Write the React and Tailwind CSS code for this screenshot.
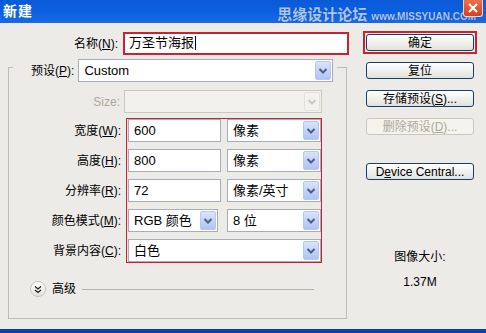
import React from "react";

const font = "font-['Liberation_Sans','Noto_Sans_CJK_SC',sans-serif]";

const Chevron = ({ color = "#4c5f87" }) => (
  <svg width="10" height="8" viewBox="0 0 10 8">
    <path d="M1.5 2 L5 5.5 L8.5 2" fill="none" stroke={color} strokeWidth="2" />
  </svg>
);

const Select = ({ value, width, disabled }) => (
  <div
    className={`flex h-[23px] border ${
      disabled ? "border-[#cac8bb] bg-[#f2f1ee]" : "border-[#a7aeb8] bg-white"
    } ${width}`}
  >
    <span className="flex-1 pl-[5px] text-[13px] leading-[21px] text-black whitespace-nowrap">
      {value}
    </span>
    <div
      className={`m-[1px] flex w-[16px] items-center justify-center rounded-[2px] border ${
        disabled
          ? "border-[#e4e2da] bg-[#f3f2ee]"
          : "border-[#b6c8f2] bg-gradient-to-b from-[#d8e3fd] to-[#afc4f4]"
      }`}
    >
      <Chevron color={disabled ? "#c9c7bf" : "#4c5f87"} />
    </div>
  </div>
);

const Input = ({ value, width }) => (
  <div className={`h-[23px] border border-[#a7aeb8] bg-white pl-[5px] text-[13px] leading-[21px] ${width}`}>
    {value}
  </div>
);

const Label = ({ text, k, tail = "):" }) => (
  <span className="text-[12px] text-black whitespace-nowrap">
    {text}(<span className="underline">{k}</span>
    {tail}
  </span>
);

const Button = ({ children, disabled }) => (
  <div
    className={`flex h-[17px] w-[108px] items-center justify-center rounded-[3px] border text-[12px] ${
      disabled
        ? "border-[#cbc8ba] bg-[#f4f3ee] text-[#aca899]"
        : "border-[#1c3c6e] bg-gradient-to-b from-white to-[#e2e2dc] text-black"
    }`}
  >
    {children}
  </div>
);

export default function App() {
  return (
    <div className={`flex h-[333px] w-[486px] flex-col overflow-hidden bg-[#ecebe8] ${font}`}>
      <div className="relative flex h-[23px] items-center bg-gradient-to-b from-[#0a5ad8] via-[#0b60e0] to-[#1a6ae4] pl-[3px]">
        <span className="text-[14px] font-bold tracking-[1px] text-white">新建</span>
        <div className="absolute right-[10px] top-[7px] flex items-end gap-[4px]">
          <span className="text-[15px] font-bold leading-[16px] text-[#a9c6f6] [text-shadow:0_0_1px_#123c92]">
            思缘设计论坛
          </span>
          <span className="text-[10px] font-bold leading-[12px] text-[#a9c6f6] [text-shadow:0_0_1px_#123c92]">
            www.MISSYUAN.COM
          </span>
        </div>
        <div className="absolute right-[3px] top-0 flex h-[17px] w-[20px] items-center justify-center rounded-b-[3px] border border-t-0 border-[#f3d2c6] bg-gradient-to-b from-[#e8704e] to-[#d4401b]">
          <svg width="12" height="12" viewBox="0 0 12 12">
            <path d="M2 2 L10 10 M10 2 L2 10" stroke="white" strokeWidth="2.2" />
          </svg>
        </div>
      </div>

      <div className="flex flex-1">
        <div className="w-[349px] pl-[8px]">
          <div className="mt-[8px] flex items-center">
            <div className="w-[112px] pr-[2px] text-right">
              <Label text="名称" k="N" />
            </div>
            <div className="ml-[3px] h-[23px] w-[226px] border-2 border-[#d0202e] bg-white">
              <div className="flex h-full items-center pl-[4px] text-[13px]">
                万圣节海报<span className="ml-[1px] h-[14px] w-[1px] bg-black" />
              </div>
            </div>
          </div>

          <div className="mt-[12px] h-[252px] w-[339px] border border-[#bdbcb5]">
            <div className="-mt-[9px] ml-[4px] flex w-[324px] items-center bg-[#ecebe8] pl-[18px]">
              <Label text="预设" k="P" />
              <div className="ml-[4px]">
                <Select value="Custom" width="w-[255px]" />
              </div>
            </div>

            <div className="mt-[8px] flex items-center">
              <div className="w-[111px] text-right text-[12px] text-[#aca899]">Size:</div>
              <div className="ml-[4px]">
                <Select value="" width="w-[198px]" disabled />
              </div>
            </div>

            <div className="mt-[5px] flex">
              <div className="flex w-[112px] flex-col gap-[7px] pt-[1px]">
                <div className="flex h-[23px] items-center justify-end"><Label text="宽度" k="W" /></div>
                <div className="flex h-[23px] items-center justify-end"><Label text="高度" k="H" /></div>
                <div className="flex h-[23px] items-center justify-end"><Label text="分辨率" k="R" /></div>
                <div className="flex h-[23px] items-center justify-end"><Label text="颜色模式" k="M" /></div>
                <div className="flex h-[23px] items-center justify-end"><Label text="背景内容" k="C" /></div>
              </div>
              <div className="ml-[5px] flex w-[196px] flex-col gap-[7px] border border-[#d0202e] pl-[1px]">
                <div className="flex gap-[6px]">
                  <Input value="600" width="w-[93px]" />
                  <Select value="像素" width="w-[94px]" />
                </div>
                <div className="flex gap-[6px]">
                  <Input value="800" width="w-[93px]" />
                  <Select value="像素" width="w-[94px]" />
                </div>
                <div className="flex gap-[6px]">
                  <Input value="72" width="w-[93px]" />
                  <Select value="像素/英寸" width="w-[94px]" />
                </div>
                <div className="flex gap-[9px]">
                  <Select value="RGB 颜色" width="w-[90px]" />
                  <Select value="8 位" width="w-[94px]" />
                </div>
                <Select value="白色" width="w-[193px]" />
              </div>
            </div>

            <div className="mt-[17px] flex items-center pl-[21px]">
              <div className="flex h-[16px] w-[16px] items-center justify-center rounded-full border border-[#c4c3bd] bg-gradient-to-b from-white to-[#e4e3de]">
                <svg width="8" height="9" viewBox="0 0 8 9">
                  <path d="M1 1.5 L4 4 L7 1.5 M1 5 L4 7.5 L7 5" fill="none" stroke="#222" strokeWidth="1.3" />
                </svg>
              </div>
              <span className="ml-[6px] text-[12px]">高级</span>
              <div className="ml-[6px] h-[1px] w-[232px] bg-[#b5b4ae]" />
            </div>
          </div>
        </div>

        <div className="ml-[17px] flex w-[108px] flex-col items-center">
          <div className="mt-[8px] border-2 border-[#d0202e] p-[1px]">
            <Button>确定</Button>
          </div>
          <div className="mt-[8px]">
            <Button>复位</Button>
          </div>
          <div className="mt-[11px]">
            <Button>
              存储预设(<span className="underline">S</span>)...
            </Button>
          </div>
          <div className="mt-[11px]">
            <Button disabled>
              删除预设(<span className="underline">D</span>)...
            </Button>
          </div>
          <div className="mt-[28px]">
            <Button>
              D<span className="underline">e</span>vice Central...
            </Button>
          </div>
          <div className="mt-[68px] text-[12px]">图像大小:</div>
          <div className="mt-[7px] text-[12px]">1.37M</div>
        </div>
      </div>

      <div className="h-[4px] bg-[#0a3fb0]" />
    </div>
  );
}
